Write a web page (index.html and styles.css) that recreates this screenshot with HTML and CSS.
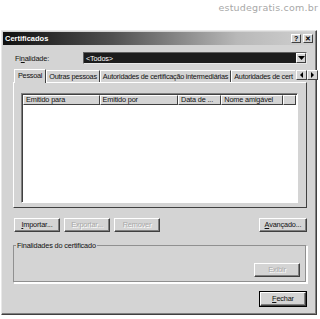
FILE: index.html
```html
<!DOCTYPE html>
<html lang="pt">
<head>
<meta charset="utf-8">
<link rel="stylesheet" href="styles.css">
</head>
<body>
<div class="watermark">estudegratis.com.br</div>
<div class="dialog">
  <div class="titlebar">
    <span class="title">Certificados</span>
    <span class="tbtns"><span class="tbtn">?</span><span class="tbtn">✕</span></span>
  </div>
  <div class="content">
    <div class="row-fin">
      <span class="lbl">Fi<u>n</u>alidade:</span>
      <div class="combo"><span class="combo-text">&lt;Todos&gt;</span><span class="combo-btn"><svg width="7" height="4" viewBox="0 0 7 4"><path d="M0 0h7L3.5 4z" fill="#000"/></svg></span></div>
    </div>
    <div class="tabs">
      <span class="tab active">Pessoal</span>
      <span class="tab">Outras pessoas</span>
      <span class="tab">Autoridades de certificação intermediárias</span>
      <span class="tab clip">Autoridades de cert</span>
      <span class="scroll"><span class="sbtn"><svg width="3" height="6" viewBox="0 0 3 6"><path d="M3 0v6L0 3z" fill="#000"/></svg></span><span class="sbtn"><svg width="3" height="6" viewBox="0 0 3 6"><path d="M0 0v6l3-3z" fill="#000"/></svg></span></span>
    </div>
    <div class="panel">
      <div class="list">
        <div class="lhead">
          <span class="col c1">Emitido para</span>
          <span class="col c2">Emitido por</span>
          <span class="col c3">Data de ...</span>
          <span class="col c4">Nome amigável</span>
          <span class="col c5"></span>
        </div>
      </div>
    </div>
    <div class="btnrow">
      <span class="btn"><u>I</u>mportar...</span>
      <span class="btn dis">Exportar...</span>
      <span class="btn dis">Remover</span>
      <span class="spacer"></span>
      <span class="btn wide"><u>A</u>vançado...</span>
    </div>
    <fieldset class="group">
      <legend>Finalidades do certificado</legend>
      <div class="grow"><span class="btn dis">Exibir</span></div>
    </fieldset>
    <div class="closerow"><span class="btn def"><u>F</u>echar</span></div>
  </div>
</div>
</body>
</html>
```
FILE: styles.css
```css
* { box-sizing: border-box; }
body { margin: 0; background: #fff; font-family: "Liberation Sans", Arial, sans-serif; font-size: 7.3px; letter-spacing: -0.15px; color: #111; width: 320px; height: 319px; overflow: hidden; }
.watermark { height: 30px; text-align: right; padding: 2px 2px 0 0; font-family: "DejaVu Sans", sans-serif; font-size: 9.5px; color: #a8a8a8; letter-spacing: 0.2px; }
.dialog { margin-left: 1px; width: 316px; height: 285px; background: #d4d4d4; border: 1px solid; border-color: #e8e8e8 #404040 #404040 #e8e8e8; box-shadow: inset -1px -1px 0 #808080; }
.titlebar { margin: 1px; height: 13px; background: linear-gradient(to right, #101010 0%, #505050 35%, #b8b8b8 75%, #d0d0d0 100%); display: flex; align-items: center; justify-content: space-between; padding: 0 2px 0 2px; }
.title { color: #fff; font-weight: bold; font-size: 7.5px; letter-spacing: 0; }
.tbtns { display: flex; gap: 2px; }
.tbtn { width: 10px; height: 9px; background: #d4d4d4; border: 1px solid; border-color: #fff #404040 #404040 #fff; font-size: 7px; font-weight: bold; line-height: 7px; text-align: center; color: #000; }
.content { padding: 6px 8px 0 11px; display: flex; flex-direction: column; }
.row-fin { display: flex; align-items: center; height: 12px; }
.lbl { width: 70px; padding-left: 2px; }
.combo { flex: 1; height: 12px; background: #1c1c1c; border: 1px solid; border-color: #606060 #e8e8e8 #e8e8e8 #606060; display: flex; align-items: center; margin-right: 1px; }
.combo-text { flex: 1; color: #fff; padding-left: 2px; }
.combo-btn { width: 10px; height: 10px; background: #d4d4d4; border: 1px solid; border-color: #fff #404040 #404040 #fff; display: flex; align-items: center; justify-content: center; }
.tabs { display: flex; align-items: flex-end; margin-top: 5px; height: 13px; letter-spacing: -0.25px; }
.tab { height: 12px; padding: 0 2px; border: 1px solid; border-bottom: none; border-color: #fff #404040 transparent #fff; white-space: nowrap; line-height: 11px; flex: none; }
.tab.active { height: 14px; padding: 0 3px; margin-left: 1px; position: relative; z-index: 1; background: #d4d4d4; margin-bottom: -1px; line-height: 12px; }
.tab.clip { flex: 1 1 auto; border-right: none; }
.scroll { display: flex; margin-left: 1px; align-self: flex-start; margin-top: 1px; }
.sbtn { width: 11px; height: 10px; background: #d4d4d4; border: 1px solid; border-color: #fff #404040 #404040 #fff; display: flex; align-items: center; justify-content: center; }
.panel { height: 126px; border: 1px solid; border-color: #fff #404040 #404040 #fff; padding: 10px 8px 5px 7px; margin-right: 1px; }
.list { height: 110px; background: #fff; border: 1px solid; border-color: #808080 #fff #fff #808080; box-shadow: inset 1px 1px 0 #404040; padding: 1px; }
.lhead { display: flex; height: 10px; }
.col { height: 10px; background: #d4d4d4; border: 1px solid; border-color: #fff #404040 #404040 #fff; padding-left: 2px; line-height: 8px; white-space: nowrap; overflow: hidden; }
.c1 { width: 78px; } .c2 { width: 80px; } .c3 { width: 44px; } .c4 { width: 63px; } .c5 { width: 13px; }
.btnrow { display: flex; gap: 4px; margin-top: 10px; padding-left: 1px; }
.spacer { flex: 1; }
.btn { width: 46px; height: 14px; background: #d4d4d4; border: 1px solid; border-color: #fff #404040 #404040 #fff; box-shadow: inset -1px -1px 0 #808080; text-align: center; line-height: 12px; white-space: nowrap; }
.btn.wide { width: 48px; margin-right: 1px; }
.btn.dis { color: #a8a8a8; text-shadow: 1px 1px 0 #fff; }
.btn.def { outline: 1px solid #000; }
.group { margin: 9px 1px 0 0; height: 42px; border: 1px solid; border-color: #909090 #fff #fff #909090; box-shadow: inset -1px -1px 0 #909090, 1px 1px 0 #fff; padding: 0 6px 0 0; }
.group legend { padding: 0 1px; margin-left: 2px; }
.grow { display: flex; justify-content: flex-end; margin-top: 13px; }
.closerow { display: flex; justify-content: flex-end; margin-top: 9px; padding-right: 2px; }
u { text-decoration: underline; }
```
